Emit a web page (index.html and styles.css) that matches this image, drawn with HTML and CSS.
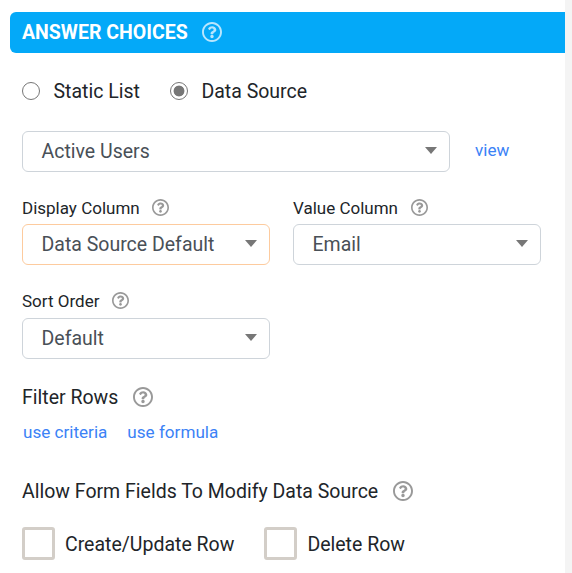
FILE: index.html
```html
<!DOCTYPE html>
<html lang="en">
<head>
<meta charset="utf-8">
<title>Answer Choices</title>
<link rel="stylesheet" href="styles.css">
</head>
<body>
<svg class="defs" aria-hidden="true">
  <symbol id="help" viewBox="8 8 496 496">
    <path d="M256 8C119.043 8 8 119.083 8 256c0 136.997 111.043 248 248 248s248-111.003 248-248C504 119.083 392.957 8 256 8zm0 448c-110.532 0-200-89.431-200-200 0-110.495 89.472-200 200-200 110.491 0 200 89.471 200 200 0 110.53-89.431 200-200 200zm107.244-255.2c0 67.052-72.421 68.084-72.421 92.863V300c0 6.627-5.373 12-12 12h-45.647c-6.627 0-12-5.373-12-12v-8.659c0-35.745 27.1-50.034 47.579-61.516 17.561-9.845 28.324-16.541 28.324-29.579 0-17.246-21.999-28.693-39.784-28.693-23.189 0-33.894 10.977-48.942 29.969-4.057 5.12-11.46 6.071-16.666 2.124l-27.824-21.098c-5.107-3.872-6.251-11.066-2.644-16.363C184.846 131.491 214.94 112 261.794 112c49.071 0 101.45 38.304 101.45 88.8zM298 368c0 23.159-18.841 42-42 42s-42-18.841-42-42 18.841-42 42-42 42 18.841 42 42z"/>
  </symbol>
</svg>
<main class="panel">
  <header class="title">
    <h1>ANSWER CHOICES</h1>
    <svg class="help"><use href="#help"/></svg>
  </header>
  <div class="body">
    <div class="radios">
      <label class="choice"><span class="radio"></span><span class="text">Static List</span></label>
      <label class="choice"><span class="radio on"></span><span class="text">Data Source</span></label>
    </div>
    <div class="source">
      <div class="select"><span class="text">Active Users</span></div>
      <a class="link">view</a>
    </div>
    <div class="columns">
      <div class="field">
        <div class="label"><span>Display Column</span><svg class="help"><use href="#help"/></svg></div>
        <div class="select active"><span class="text">Data Source Default</span></div>
      </div>
      <div class="field">
        <div class="label"><span>Value Column</span><svg class="help"><use href="#help"/></svg></div>
        <div class="select"><span class="text">Email</span></div>
      </div>
      <div class="field sort">
        <div class="label"><span>Sort Order</span><svg class="help"><use href="#help"/></svg></div>
        <div class="select"><span class="text">Default</span></div>
      </div>
    </div>
    <div class="heading filter"><span class="text">Filter Rows</span><svg class="help"><use href="#help"/></svg></div>
    <div class="links"><a class="link">use criteria</a><a class="link">use formula</a></div>
    <div class="heading modify"><span class="text">Allow Form Fields To Modify Data Source</span><svg class="help"><use href="#help"/></svg></div>
    <div class="checks">
      <label class="check"><span class="box"></span><span class="text">Create/Update Row</span></label>
      <label class="check"><span class="box"></span><span class="text">Delete Row</span></label>
    </div>
  </div>
</main>
</body>
</html>
```
FILE: styles.css
```css
* { box-sizing: border-box; }
body {
  margin: 0;
  height: 573px;
  overflow: hidden;
  background: #f4f4f4;
  font: 19.5px/24px Roboto, sans-serif;
  color: #212529;
}
.defs { display: none; }
.panel {
  width: 565px;
  height: 573px;
  padding: 12px 0 0 10px;
  background: #fff;
}
.help {
  flex: none;
  width: 20px;
  height: 20px;
  fill: #999;
}
.text { padding-top: 2px; }
.title {
  display: flex;
  align-items: center;
  gap: 14px;
  height: 41px;
  padding: 0 0 2px 12px;
  border-radius: 6px 0 0 6px;
  background: #04a9f8;
  color: #fff;
}
.title h1 {
  margin: 0;
  padding-top: 3px;
  font-size: 19.5px;
  font-weight: 700;
}
.title .help { fill: #b9e6fd; }
.body { padding-left: 12px; }
.radios {
  display: flex;
  gap: 30px;
  margin-top: 25px;
}
.choice { display: flex; align-items: center; gap: 13.5px; }
.radio {
  width: 18px;
  height: 18px;
  border: 1.5px solid #767676;
  border-radius: 50%;
}
.radio.on { background: radial-gradient(circle, #767676 5px, #fff 5.8px); }
.source {
  display: flex;
  align-items: center;
  gap: 25px;
  margin-top: 27px;
}
.source .link { padding-bottom: 3px; }
.select {
  display: flex;
  align-items: center;
  justify-content: space-between;
  height: 41px;
  padding: 0 12.5px 2px 18.5px;
  border: 1px solid #ced4da;
  border-radius: 6px;
  color: #495057;
}
.select::after {
  content: "";
  border: 6px solid transparent;
  border-top: 7px solid #777;
  border-bottom: 0;
}
.select.active { border-color: #fdcb9e; }
.source .select { width: 428px; }
.link {
  font-size: 17.1px;
  color: #3b82f6;
}
.columns {
  display: grid;
  grid-template-columns: 248px 248px;
  gap: 26px 23px;
  margin-top: 26px;
}
.label {
  display: flex;
  align-items: center;
  gap: 12.5px;
  height: 19px;
  margin-bottom: 7px;
  font-size: 17px;
}
.sort .label { margin-bottom: 8px; }
.label .help { width: 17px; height: 17px; }
.heading { display: flex; align-items: center; gap: 14.5px; }
.filter { margin-top: 25px; }
.links {
  display: flex;
  gap: 20px;
  margin-top: 10px;
  padding-left: 1px;
}
.modify { margin-top: 34px; }
.checks {
  display: flex;
  gap: 30px;
  margin-top: 23px;
}
.check { display: flex; align-items: center; gap: 10px; }
.box {
  width: 33px;
  height: 33px;
  border: 3px solid #d3cec8;
  border-radius: 3px;
}
```
